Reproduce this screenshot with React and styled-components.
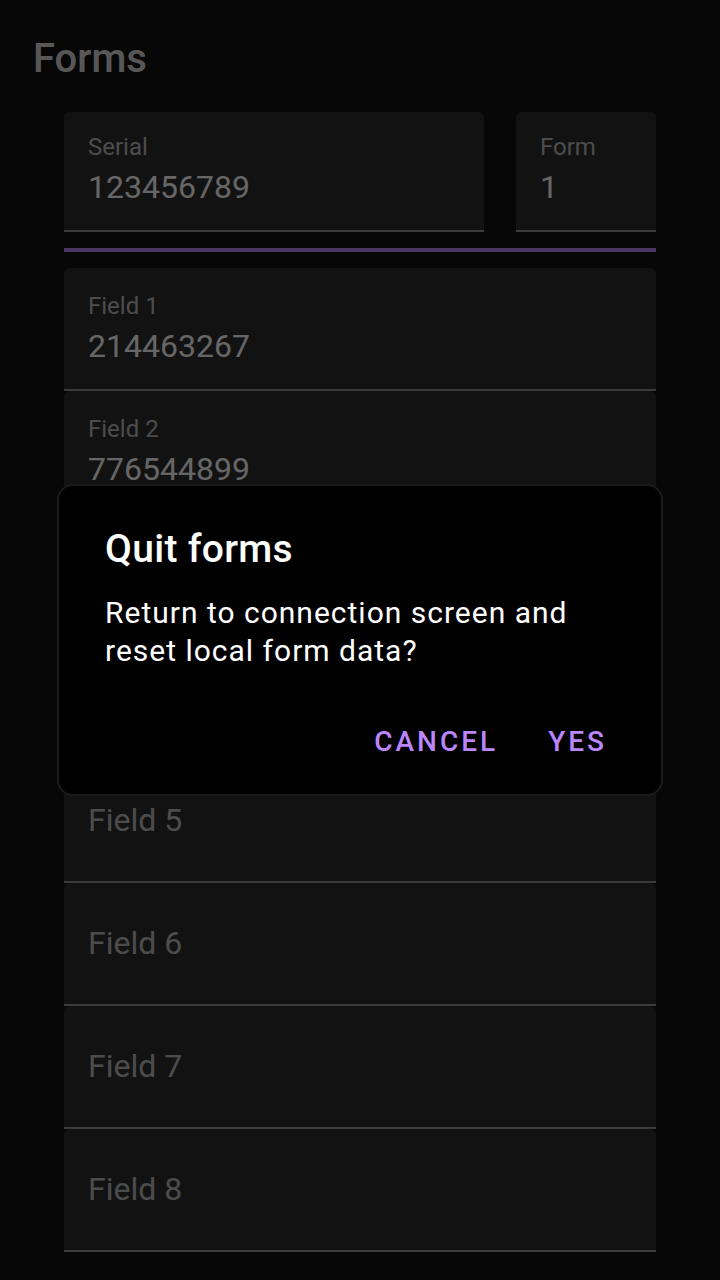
import React from "react";
import styled, { createGlobalStyle } from "styled-components";

const fields = [
  { label: "Field 1", value: "214463267" },
  { label: "Field 2", value: "776544899" },
  { label: "Field 3", value: "" },
  { label: "Field 4", value: "" },
  { label: "Field 5", value: "" },
  { label: "Field 6", value: "" },
  { label: "Field 7", value: "" },
  { label: "Field 8", value: "" },
];

const TextField = ({ label, value, compact }) => (
  <FieldBox compact={compact} filled={!!value}>
    {value ? (
      <>
        <FieldLabel>{label}</FieldLabel>
        <FieldValue>{value}</FieldValue>
      </>
    ) : (
      <EmptyLabel>{label}</EmptyLabel>
    )}
  </FieldBox>
);

const App = () => {
  return (
    <>
      <GlobalStyle />
      <Page>
        <Title>Forms</Title>
        <Content>
          <TopRow>
            <TextField label="Serial" value="123456789" compact />
            <TextField label="Form" value="1" compact />
          </TopRow>
          <Indicator />
          <FieldList>
            {fields.map((f) => (
              <TextField key={f.label} label={f.label} value={f.value} />
            ))}
          </FieldList>
        </Content>
      </Page>
      <Scrim>
        <Dialog>
          <DialogTitle>Quit forms</DialogTitle>
          <DialogText>
            Return to connection screen and reset local form data?
          </DialogText>
          <DialogActions>
            <TextButton>Cancel</TextButton>
            <TextButton>Yes</TextButton>
          </DialogActions>
        </Dialog>
      </Scrim>
    </>
  );
};

const GlobalStyle = createGlobalStyle`
  html, body {
    margin: 0;
    padding: 0;
    background: #121212;
    font-family: "Roboto", "Noto Sans", sans-serif;
  }
  * {
    box-sizing: border-box;
  }
`;

const Page = styled.div`
  min-height: 1280px;
  padding-top: 36px;
  background: #121212;
`;

const Title = styled.h1`
  margin: 0 0 30px 33px;
  font-size: 40px;
  line-height: 46px;
  font-weight: 500;
  color: rgba(255, 255, 255, 0.87);
`;

const Content = styled.div`
  padding: 0 64px;
  display: flex;
  flex-direction: column;
`;

const TopRow = styled.div`
  display: grid;
  grid-template-columns: 1fr 140px;
  gap: 32px;
`;

const Indicator = styled.div`
  height: 4px;
  margin: 16px 0;
  background: #bb86fc;
`;

const FieldList = styled.div`
  display: flex;
  flex-direction: column;
`;

const FieldBox = styled.div`
  height: ${(p) => (p.compact ? "120px" : "123px")};
  padding: ${(p) => (p.filled ? (p.compact ? "21px" : "24px") : "40px")} 24px 0;
  background: #2d2d2d;
  border-bottom: 2px solid #969696;
  border-radius: 6px 6px 0 0;
  display: flex;
  flex-direction: column;
  overflow: hidden;
`;

const FieldLabel = styled.span`
  font-size: 24px;
  line-height: 28px;
  color: rgba(255, 255, 255, 0.7);
`;

const FieldValue = styled.span`
  margin-top: 6px;
  font-size: 32px;
  line-height: 40px;
  color: #ffffff;
`;

const EmptyLabel = styled.span`
  font-size: 32px;
  line-height: 40px;
  color: rgba(255, 255, 255, 0.7);
`;

const Scrim = styled.div`
  position: fixed;
  inset: 0;
  background: rgba(0, 0, 0, 0.6);
  display: flex;
  align-items: center;
  justify-content: center;
`;

const Dialog = styled.div`
  width: 606px;
  background: #000000;
  border: 2px solid #1c1c1c;
  border-radius: 16px;
  padding: 39px 41px 16px 46px;
  display: flex;
  flex-direction: column;
`;

const DialogTitle = styled.h2`
  margin: 0;
  font-size: 39px;
  line-height: 48px;
  font-weight: 500;
  letter-spacing: 0.3px;
  color: #ffffff;
`;

const DialogText = styled.p`
  margin: 21px 0 0;
  font-size: 30px;
  line-height: 37.5px;
  letter-spacing: 1px;
  color: #ffffff;
`;

const DialogActions = styled.div`
  margin-top: 37px;
  display: flex;
  justify-content: flex-end;
  gap: 21px;
`;

const TextButton = styled.button`
  height: 72px;
  padding: 0 13px 0 16px;
  border: none;
  background: none;
  font-family: inherit;
  font-size: 28px;
  line-height: 36px;
  font-weight: 500;
  letter-spacing: 3px;
  text-transform: uppercase;
  color: #bb86fc;
`;

export default App;
